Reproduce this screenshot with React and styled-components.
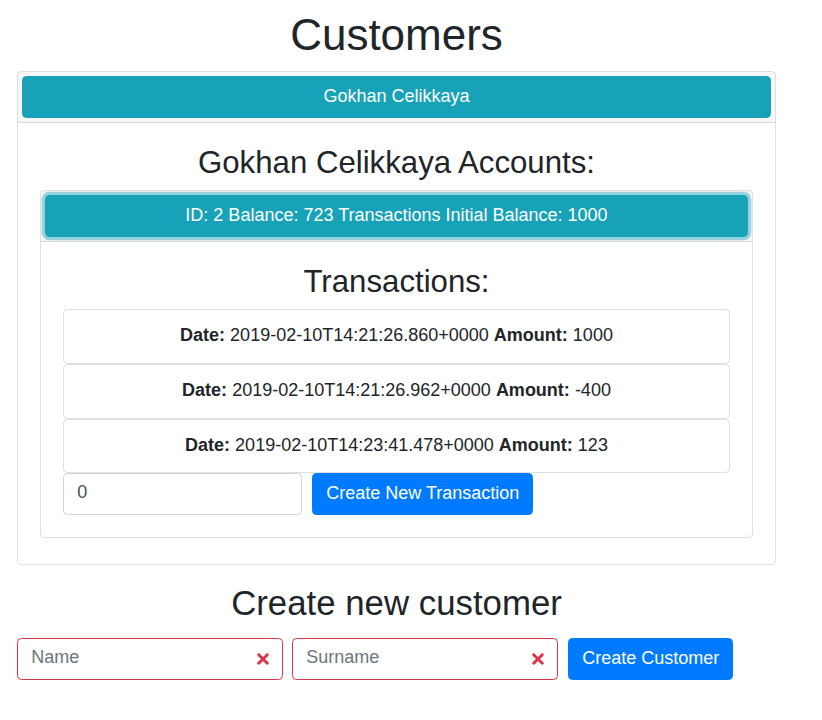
import React, { useState } from "react";
import styled, { createGlobalStyle } from "styled-components";

const transactions = [
  { date: "2019-02-10T14:21:26.860+0000", amount: "1000" },
  { date: "2019-02-10T14:21:26.962+0000", amount: "-400" },
  { date: "2019-02-10T14:23:41.478+0000", amount: "123" },
];

const InvalidIcon = () => (
  <IconBox viewBox="-2 -2 7 7" fill="#dc3545">
    <path stroke="#dc3545" d="M0 0l3 3m0-3L0 3" />
    <circle r=".5" />
    <circle cx="3" r=".5" />
    <circle cy="3" r=".5" />
    <circle cx="3" cy="3" r=".5" />
  </IconBox>
);

const App = () => {
  const [amount, setAmount] = useState("0");
  const [form, setForm] = useState({ name: "", surname: "" });

  return (
    <>
      <GlobalStyle />
      <Page>
        <Title>Customers</Title>
        <Card>
          <CardHeader>
            <InfoButton>Gokhan Celikkaya</InfoButton>
          </CardHeader>
          <CardBody>
            <SubTitle>Gokhan Celikkaya Accounts:</SubTitle>
            <Card $gap>
              <CardHeader>
                <InfoButton $focused>
                  ID: 2 Balance: 723 Transactions Initial Balance: 1000
                </InfoButton>
              </CardHeader>
              <CardBody>
                <SubTitle>Transactions:</SubTitle>
                {transactions.map((t) => (
                  <TxItem key={t.date}>
                    <b>Date:</b> {t.date} <b>Amount:</b> {t.amount}
                  </TxItem>
                ))}
                <FormRow>
                  <Input
                    $width={239}
                    value={amount}
                    onChange={(e) => setAmount(e.target.value)}
                  />
                  <PrimaryButton>Create New Transaction</PrimaryButton>
                </FormRow>
              </CardBody>
            </Card>
          </CardBody>
        </Card>

        <Heading>Create new customer</Heading>
        <FormRow $gap={9}>
          <Field>
            <Input
              $width={266}
              $invalid
              placeholder="Name"
              value={form.name}
              onChange={(e) => setForm({ ...form, name: e.target.value })}
            />
            <InvalidIcon />
          </Field>
          <Field>
            <Input
              $width={266}
              $invalid
              placeholder="Surname"
              value={form.surname}
              onChange={(e) => setForm({ ...form, surname: e.target.value })}
            />
            <InvalidIcon />
          </Field>
          <PrimaryButton $shift>Create Customer</PrimaryButton>
        </FormRow>
      </Page>
    </>
  );
};

export default App;

const GlobalStyle = createGlobalStyle`
  * { box-sizing: border-box; }
  body {
    margin: 0;
    background: #fff;
    color: #212529;
    font-family: "Liberation Sans", Arial, sans-serif;
    font-size: 18px;
    line-height: 26.4px;
  }
`;

const Page = styled.div`
  width: 759px;
  margin-left: 17px;
  padding-top: 9px;
`;

const Title = styled.h1`
  margin: 0 0 8.8px;
  font-size: 44px;
  font-weight: 400;
  line-height: 52.8px;
  text-align: center;
`;

const SubTitle = styled.h3`
  margin: 0 0 8.8px;
  font-size: 31.2px;
  font-weight: 400;
  line-height: 37px;
  text-align: center;
`;

const Heading = styled.h2`
  margin: 17px 0 14px;
  font-size: 34.8px;
  font-weight: 400;
  line-height: 42.2px;
  text-align: center;
`;

const Card = styled.div`
  border: 1px solid rgba(0, 0, 0, 0.125);
  border-radius: 4.4px;
  background: #fff;
  margin-bottom: ${(p) => (p.$gap ? "4px" : "0")};
`;

const CardHeader = styled.div`
  padding: 4.4px;
  background: rgba(0, 0, 0, 0.03);
  border-bottom: 1px solid rgba(0, 0, 0, 0.125);
`;

const CardBody = styled.div`
  padding: 21px 22px 22px;
`;

const InfoButton = styled.button`
  display: block;
  width: 100%;
  padding: 5.6px 13.2px 7.6px;
  border: 1px solid #17a2b8;
  border-radius: 4.4px;
  background: #17a2b8;
  color: #fff;
  font-family: inherit;
  font-size: 18px;
  line-height: 26.4px;
  text-align: center;
  cursor: pointer;
  box-shadow: ${(p) =>
    p.$focused ? "0 0 0 3.3px rgba(58, 176, 195, 0.5)" : "none"};
`;

const TxItem = styled.div`
  padding: 12.2px 22px 14.2px;
  border: 1px solid rgba(0, 0, 0, 0.125);
  border-radius: 4.4px;
  text-align: center;

  b {
    font-weight: 700;
  }
`;

const FormRow = styled.div`
  display: flex;
  align-items: flex-start;
  gap: ${(p) => p.$gap || 10}px;
`;

const Field = styled.div`
  position: relative;
`;

const Input = styled.input`
  display: block;
  width: ${(p) => p.$width}px;
  height: 41.8px;
  padding: 5px ${(p) => (p.$invalid ? "39.6px" : "13.2px")} 8.2px 13.2px;
  border: 1px solid ${(p) => (p.$invalid ? "#dc3545" : "#ced4da")};
  border-radius: 4.4px;
  background: #fff;
  color: #495057;
  font-family: inherit;
  font-size: 18px;
  line-height: 26.4px;
  outline: none;

  &::placeholder {
    color: #6c757d;
    opacity: 1;
  }
`;

const IconBox = styled.svg`
  position: absolute;
  right: 9.9px;
  top: 50%;
  width: 20px;
  height: 20px;
  transform: translateY(-50%);
`;

const PrimaryButton = styled.button`
  height: 41.8px;
  margin-left: ${(p) => (p.$shift ? "1px" : "0")};
  padding: 5.6px 13.2px 7.6px;
  border: 1px solid #007bff;
  border-radius: 4.4px;
  background: #007bff;
  color: #fff;
  font-family: inherit;
  font-size: 18px;
  line-height: 26.4px;
  cursor: pointer;
  white-space: nowrap;
`;
